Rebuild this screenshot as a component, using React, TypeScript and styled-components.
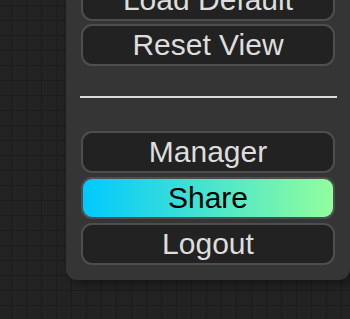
import React from "react";
import styled, { createGlobalStyle } from "styled-components";

const GlobalStyle = createGlobalStyle`
  html, body {
    margin: 0;
    padding: 0;
    background: #222;
    overflow: hidden;
  }
  #root {
    width: 350px;
    height: 319px;
  }
`;

const Canvas = styled.div`
  position: relative;
  width: 350px;
  height: 319px;
  overflow: hidden;
  background-color: #232323;
  background-image:
    linear-gradient(to right, #1c1c1c 1px, transparent 1px),
    linear-gradient(to bottom, #1c1c1c 1px, transparent 1px);
  background-size: 15px 15px;
  background-position: 11px 5px;
`;

const Menu = styled.div`
  position: absolute;
  top: -40px;
  left: 66px;
  right: 0;
  box-sizing: border-box;
  display: flex;
  flex-direction: column;
  padding: 19px 15px 15px;
  background-color: #353535;
  border-radius: 0 11px 11px 11px;
  box-shadow: 4px 4px 11px rgba(0, 0, 0, 0.4);
  font-family: "Liberation Sans", Arial, sans-serif;
`;

const Group = styled.div<{ $gap: number }>`
  display: flex;
  flex-direction: column;
  gap: ${(p) => p.$gap}px;
`;

const MenuButton = styled.button<{ $share?: boolean }>`
  box-sizing: border-box;
  width: 100%;
  height: 42px;
  margin: 0;
  padding: 0 8px;
  font-family: "Liberation Sans", Arial, sans-serif;
  font-size: 30px;
  line-height: 1;
  color: ${(p) => (p.$share ? "#000" : "#ddd")};
  background: ${(p) =>
    p.$share ? "linear-gradient(90deg, #00C9FF 0%, #92FE9D 100%)" : "#222"};
  border: 2.67px solid #4e4e4e;
  border-radius: 11px;
  cursor: pointer;
`;

const Divider = styled.hr`
  height: 2px;
  margin: 30px -2px 33px -1px;
  border: none;
  background: #dcdcdc;
`;

export default function App() {
  return (
    <>
      <GlobalStyle />
      <Canvas>
        <Menu>
          <Group $gap={3}>
            <MenuButton>Load Default</MenuButton>
            <MenuButton>Reset View</MenuButton>
          </Group>
          <Divider />
          <Group $gap={4}>
            <MenuButton>Manager</MenuButton>
            <MenuButton $share>Share</MenuButton>
            <MenuButton>Logout</MenuButton>
          </Group>
        </Menu>
      </Canvas>
    </>
  );
}
